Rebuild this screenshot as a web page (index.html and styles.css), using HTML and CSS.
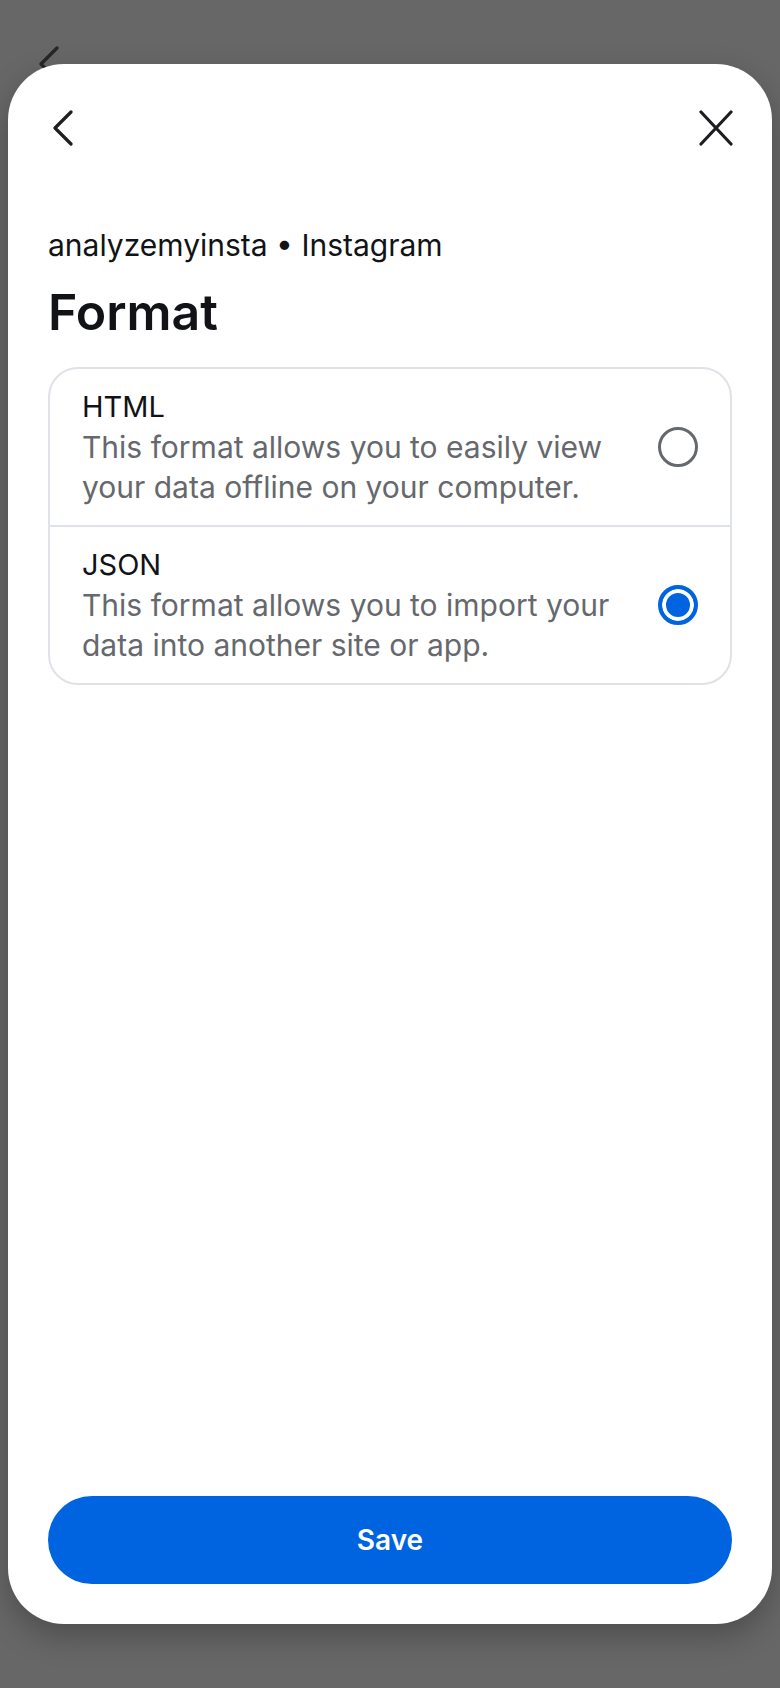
FILE: index.html
```html
<!DOCTYPE html>
<html lang="en">
<head>
<meta charset="utf-8">
<title>Format</title>
<link rel="stylesheet" href="styles.css">
</head>
<body>
<div class="screen">
  <svg class="bg-back" width="24" height="36" viewBox="0 0 24 36" aria-hidden="true">
    <path d="M19 2 L3 18 L19 34" fill="none" stroke="#262626" stroke-width="3.2" stroke-linecap="round" stroke-linejoin="round"/>
  </svg>
  <div class="sheet">
    <div class="sheet-header">
      <button class="icon-btn" aria-label="Back">
        <svg width="22" height="36" viewBox="0 0 22 36">
          <path d="M19 2 L3 18 L19 34" fill="none" stroke="#1c1e21" stroke-width="3.2" stroke-linecap="round" stroke-linejoin="round"/>
        </svg>
      </button>
      <button class="icon-btn" aria-label="Close">
        <svg width="36" height="36" viewBox="0 0 36 36">
          <path d="M3 2 L33 34 M33 2 L3 34" fill="none" stroke="#1c1e21" stroke-width="3.2" stroke-linecap="round"/>
        </svg>
      </button>
    </div>
    <div class="sheet-body">
      <p class="subtitle">analyzemyinsta • Instagram</p>
      <h1 class="title">Format</h1>
      <div class="options">
        <div class="option">
          <div class="option-text">
            <div class="option-name">HTML</div>
            <div class="option-desc">This format allows you to easily view your data offline on your computer.</div>
          </div>
          <span class="radio"></span>
        </div>
        <div class="option">
          <div class="option-text">
            <div class="option-name">JSON</div>
            <div class="option-desc">This format allows you to import your data into another site or app.</div>
          </div>
          <span class="radio radio-on"></span>
        </div>
      </div>
    </div>
    <div class="sheet-footer">
      <button class="save-btn">Save</button>
    </div>
  </div>
</div>
</body>
</html>
```
FILE: styles.css
```css
* { box-sizing: border-box; }
html, body {
  margin: 0;
  padding: 0;
  background: #676767;
}
body {
  font-family: Inter, "Noto Sans", Roboto, sans-serif;
  color: #111316;
}
.screen {
  position: relative;
  width: 780px;
  height: 1688px;
  padding: 64px 8px 0;
  background: #676767;
}
.bg-back {
  position: absolute;
  left: 38px;
  top: 46px;
}
.sheet {
  position: relative;
  height: 1560px;
  background: #fff;
  border-radius: 56px;
  box-shadow: 0 12px 30px rgba(0,0,0,0.25);
  display: flex;
  flex-direction: column;
}
.sheet-header {
  display: flex;
  justify-content: space-between;
  align-items: center;
  padding: 46px 38px 0 44px;
}
.icon-btn {
  border: 0;
  background: none;
  padding: 0;
  display: flex;
  height: 36px;
}
.sheet-body {
  flex: 1;
  padding: 0 40px;
}
.subtitle {
  margin: 81px 0 0;
  font-size: 30px;
  line-height: 36px;
  font-weight: 400;
  color: #111316;
}
.title {
  margin: 20px 0 0;
  font-size: 50px;
  line-height: 58px;
  font-weight: 600;
  color: #111316;
}
.options {
  margin-top: 26px;
  border: 2px solid #dfe2e6;
  border-radius: 30px;
  overflow: hidden;
}
.option {
  display: flex;
  align-items: center;
  gap: 20px;
  padding: 18px 32px 18px 32px;
  min-height: 156px;
}
.option + .option {
  border-top: 2px solid #dfe2e6;
}
.option-text {
  flex: 1;
}
.option-name {
  font-size: 29px;
  line-height: 40px;
  color: #111316;
}
.option-desc {
  font-size: 30px;
  line-height: 40px;
  color: #65686c;
}
.radio {
  flex: none;
  width: 40px;
  height: 40px;
  border-radius: 50%;
  border: 3px solid #65686c;
}
.radio-on {
  border: 4px solid #0064e0;
  background: #0064e0;
  box-shadow: inset 0 0 0 4px #fff;
}
.sheet-footer {
  padding: 0 40px 40px;
}
.save-btn {
  width: 100%;
  height: 88px;
  border: 0;
  border-radius: 44px;
  background: #0064e0;
  color: #fff;
  font-family: Inter, "Noto Sans", Roboto, sans-serif;
  font-size: 28px;
  font-weight: 600;
}
```
